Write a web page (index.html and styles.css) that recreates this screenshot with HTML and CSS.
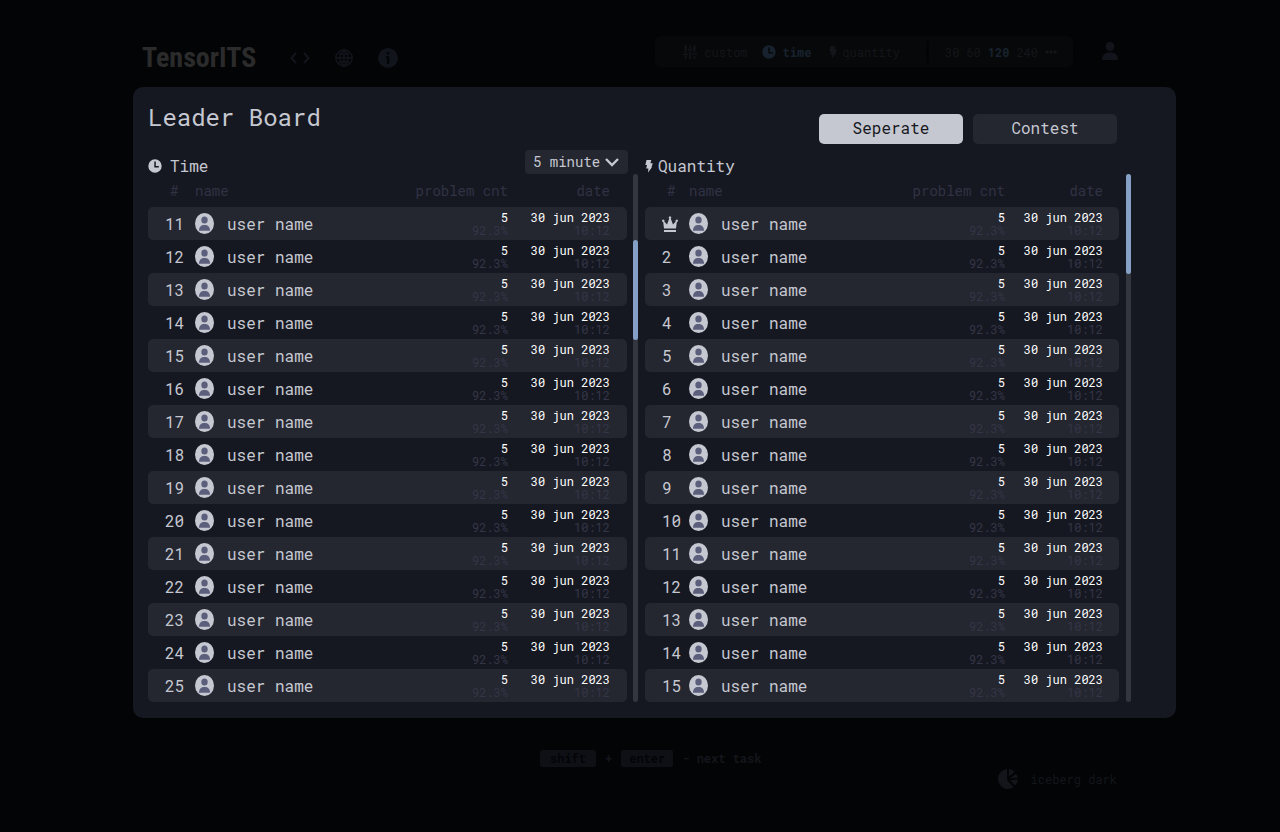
FILE: index.html
```
<!DOCTYPE html>
<html lang="en">
<head>
<meta charset="utf-8">
<title>TensorITS - Leader Board</title>
<link rel="stylesheet" href="styles.css">
</head>
<body>
<svg class="sprite" aria-hidden="true">
  <symbol id="avatar" viewBox="0 0 19 21">
    <ellipse cx="9.5" cy="10.5" rx="9.5" ry="10.5" fill="#c6c8d1"/>
    <ellipse cx="9.5" cy="7" rx="3.2" ry="3.6" fill="#5b5f7b"/>
    <path d="M4 17.800c0-4 2-5.800 5.500-5.800s5.500 1.800 5.500 5.800z" fill="#5b5f7b"/>
  </symbol>
  <symbol id="clock" viewBox="0 0 14 14">
    <path fill="currentColor" fill-rule="evenodd" d="M7 .3a6.700 6.700 0 1 0 0 13.400a6.700 6.700 0 0 0 0-13.400zM6.300 2.500h1.500v4.400h3v1.500H6.300z"/>
  </symbol>
  <symbol id="bolt" viewBox="0 0 8 14">
    <path fill="currentColor" d="M1.500 1h4.800L5.400 4.200H7.800L6.500 8.200H7L3 13.500 3.400 9.500H1.200L2 6H.4z"/>
  </symbol>
  <symbol id="crown" viewBox="0 0 16 16">
    <path fill="currentColor" d="M2 12.500 1.200 6A1.200 1.200 0 1 1 2.300 5.400L5 8.500 7.300 2.600a1.200 1.200 0 1 1 1.400 0L11 8.500l2.700-3.100A1.200 1.200 0 1 1 14.800 6L14 12.500zM2 14h12v2H2z"/>
  </symbol>
</svg>

<div class="page">
  <header class="topbar">
    <div class="brand">
      <span class="logo">TensorITS</span>
      <a href="#" aria-label="Code"><svg width="20" height="20" viewBox="0 0 20 20" fill="none" stroke="currentColor" stroke-width="2"><path d="M6 5 1.500 10 6 15M14 5l4.500 5L14 15"/></svg></a>
      <a href="#" aria-label="Language"><svg width="20" height="20" viewBox="0 0 20 20" fill="none" stroke="currentColor" stroke-width="1.500"><circle cx="10" cy="10" r="8.200"/><path d="M10 2v16M2 10h16M4 4.500c3.500 3 8.500 3 12 0M4 15.500c3.500-3 8.500-3 12 0M10 2c-5.500 4-5.500 12 0 16M10 2c5.500 4 5.500 12 0 16"/></svg></a>
      <a href="#" aria-label="About"><svg width="20" height="20" viewBox="0 0 20 20"><circle cx="10" cy="10" r="10" fill="currentColor"/><path d="M9 4h2.300v2.400H9zM8 8.300h3.300V16H9v-6H8z" fill="#030406"/></svg></a>
    </div>
    <nav class="modes">
      <button class="mode" type="button"><svg width="14" height="14" viewBox="0 0 14 14" fill="none" stroke="currentColor" stroke-width="1.600"><path d="M2.500 0v8M2.500 11v3M7 0v3M7 6v8M11.500 0v7M11.500 11v3M0 9.500h5M4.500 4.500h5M9 9h5M1 3h3M10 3h3"/></svg>custom</button>
      <button class="mode active" type="button"><svg width="14" height="14"><use href="#clock"/></svg>time</button>
      <button class="mode tight" type="button"><svg width="8" height="14"><use href="#bolt"/></svg>quantity</button>
      <span class="divider"></span>
      <div class="counts">
        <button type="button">30</button>
        <button type="button">60</button>
        <button type="button" class="active">120</button>
        <button type="button">240</button>
        <button type="button" aria-label="More"><svg width="12" height="4" viewBox="0 0 12 4" fill="currentColor"><circle cx="2" cy="2" r="1.700"/><circle cx="6" cy="2" r="1.700"/><circle cx="10" cy="2" r="1.700"/></svg></button>
      </div>
    </nav>
    <a class="account" href="#" aria-label="Account"><svg width="16" height="18" viewBox="0 0 16 18" fill="currentColor"><circle cx="8" cy="4.500" r="4.500"/><path d="M0 18c0-5 2.500-7.500 8-7.500s8 2.500 8 7.500z"/></svg></a>
  </header>

  <main class="dialog" role="dialog" aria-labelledby="title">
    <div class="dialog-head">
      <h1 id="title">Leader Board</h1>
      <div class="tabs">
        <button class="tab selected" type="button">Seperate</button>
        <button class="tab" type="button">Contest</button>
      </div>
    </div>
    <div class="boards">
      <section class="board">
        <div class="board-head">
          <h2><svg width="14" height="14"><use href="#clock"/></svg>Time</h2>
          <div class="picker">
            <select aria-label="Duration"><option>5 minute</option></select>
            <svg width="14" height="9" viewBox="0 0 14 9" fill="none" stroke="currentColor" stroke-width="2.400"><path d="M1 1l6 6 6-6"/></svg>
          </div>
        </div>
        <table>
          <colgroup><col class="col-rank"><col class="col-face"><col><col class="col-count"><col class="col-date"></colgroup>
          <thead><tr><th class="rank">#</th><th class="name" colspan="2">name</th><th class="count">problem cnt</th><th class="date">date</th></tr></thead>
          <tbody data-from="11" data-to="25"></tbody>
        </table>
        <div class="track"><div class="thumb scrolled"></div></div>
      </section>
      <section class="board quantity">
        <div class="board-head">
          <h2><svg width="8" height="14"><use href="#bolt"/></svg>Quantity</h2>
        </div>
        <table>
          <colgroup><col class="col-rank"><col class="col-face"><col><col class="col-count"><col class="col-date"></colgroup>
          <thead><tr><th class="rank">#</th><th class="name" colspan="2">name</th><th class="count">problem cnt</th><th class="date">date</th></tr></thead>
          <tbody data-from="1" data-to="15"></tbody>
        </table>
        <div class="track"><div class="thumb"></div></div>
      </section>
    </div>
  </main>

  <footer class="footer">
    <p class="hint"><kbd>shift</kbd><span>+</span><kbd>enter</kbd><span>- next task</span></p>
    <button class="theme" type="button"><svg width="20" height="20" viewBox="0 0 20 20" fill="currentColor"><path d="M9 0a10 10 0 1 0 6.500 18.300L9 11zM11 0v7.500L16.500 3A10 10 0 0 0 11 0zM18 4.800 12 9.500l7.800-1A10 10 0 0 0 18 4.800zM12 11.200l5 5.300a10 10 0 0 0 3-6.200z"/></svg>iceberg dark</button>
  </footer>
</div>
<script src="board.js"></script>
</body>
</html>
```

FILE: styles.css
```
* { box-sizing: border-box; }

body {
  margin: 0;
  background: #030406;
  color: #c6c8d1;
  font-family: "Roboto Mono", "Liberation Mono", monospace;
  font-size: 16px;
}

h1, h2, p { margin: 0; font-weight: 400; }
svg { display: block; flex: none; }
.sprite { position: absolute; width: 0; height: 0; }

button, select {
  font: inherit;
  color: inherit;
  background: none;
  border: 0;
  padding: 0;
}

a { color: inherit; }

.page { padding: 36px 104px 0 133px; }

/* top bar */
.topbar {
  display: flex;
  align-items: flex-start;
  padding: 0 58px 14px 9px;
  color: #12141b;
}

.brand {
  display: flex;
  align-items: center;
  gap: 24px;
  height: 31px;
  margin-top: 6px;
}

.logo {
  width: 124px;
  font: 700 28px/31px "Roboto Condensed", Roboto, sans-serif;
  color: #2b2b2b;
}

.modes {
  display: flex;
  align-items: center;
  height: 31px;
  margin-left: auto;
  padding: 0 16px 0 28px;
  border-radius: 5px;
  background: #070809;
  font-size: 12px;
  color: #14151a;
}

.mode { display: flex; align-items: center; gap: 7px; margin-right: 14px; }
.mode.tight { gap: 5px; margin: 0 26px 0 4px; }
.modes .active { color: #18222e; font-weight: 700; }
.divider { width: 3px; height: 22px; margin-right: 16px; background: #030406; }
.counts { display: flex; align-items: center; gap: 7px; }
.account { margin: 6px 0 0 29px; }

/* dialog */
.dialog {
  padding: 0 45px 16px 15px;
  border-radius: 10px;
  background: #161821;
}

.dialog-head {
  display: flex;
  justify-content: space-between;
  height: 63px;
  padding-right: 14px;
}

h1 { padding-top: 14px; font-size: 24px; line-height: 32px; }

.tabs { display: flex; gap: 10px; padding-top: 27px; }

.tab {
  width: 144px;
  height: 30px;
  padding: 0 4px 3px;
  border-radius: 5px;
  background: #242630;
}

.tab.selected { background: #c6c8d1; color: #161821; }

.boards { display: grid; grid-template-columns: 490fr 486fr; gap: 7px; }

.board {
  display: grid;
  grid-template-columns: 1fr 5px;
  grid-template-rows: 24px auto;
  column-gap: 6px;
}

.board.quantity { column-gap: 7px; }
.board-head { grid-column: 1 / -1; display: flex; justify-content: space-between; padding-right: 10px; }
h2 { display: flex; align-items: center; gap: 8px; padding-top: 8px; font-size: 16px; line-height: 16px; }
.quantity h2 { gap: 5px; }

.picker { display: grid; align-items: center; width: 103px; height: 24px; }
.picker select, .picker svg { grid-area: 1 / 1; }
.picker select {
  appearance: none;
  height: 24px;
  padding: 0 8px 2px;
  border-radius: 4px;
  background: #242630;
  font-size: 14px;
}
.picker svg { justify-self: end; margin-right: 9px; pointer-events: none; }

table { width: 100%; border-spacing: 0; table-layout: fixed; }
tr { height: 33px; }
th, td { padding: 0; text-align: left; white-space: nowrap; }
th { font-size: 14px; font-weight: 400; color: #303244; }
.col-rank { width: 47px; }
.col-face { width: 32px; }
.col-count { width: 100px; }
.col-date { width: 119px; }
.rank { padding-left: 17px; }
th.rank { padding-left: 22px; }
.count { text-align: right; }
.date { padding-right: 17px; text-align: right; }
td.count, td.date { font-size: 12px; line-height: 13px; color: #fff; }
td small { display: block; font-size: 12px; color: #343647; }
tbody tr:nth-child(odd) td { background: #242630; }
tbody td:first-child { border-radius: 5px 0 0 5px; }
tbody td:last-child { border-radius: 0 5px 5px 0; }
.quantity .col-rank { width: 44px; }
.quantity .col-date { width: 114px; }
.quantity .date { padding-right: 16px; }

.track { border-radius: 3px; background: #33353f; }
.thumb { height: 100px; border-radius: 3px; background: #84a0c6; }
.thumb.scrolled { transform: translateY(66px); }

/* footer */
.footer { padding-top: 32px; font-size: 12px; color: #14151a; }
.hint { display: flex; align-items: center; gap: 9px; margin-left: 407px; font-weight: 700; line-height: 17px; }
kbd { padding: 0 8px; border-radius: 2px; background: #0f1016; color: #030406; font: inherit; }
kbd:first-child { padding: 0 10px; }
.theme { display: flex; align-items: center; gap: 13px; margin: 2px 59px 0 auto; }
```

FILE: board.js
```
document.querySelectorAll("tbody").forEach(function (body) {
  for (let n = Number(body.dataset.from); n <= Number(body.dataset.to); n++) {
    const rank = n === 1
      ? '<svg width="16" height="16" role="img" aria-label="1"><use href="#crown"/></svg>'
      : n;
    body.insertAdjacentHTML("beforeend",
      '<tr><td class="rank">' + rank + '</td>' +
      '<td class="face"><svg width="19" height="21"><use href="#avatar"/></svg></td>' +
      '<td class="name">user name</td>' +
      '<td class="count">5<small>92.3%</small></td>' +
      '<td class="date">30 jun 2023<small>10:12</small></td></tr>');
  }
});
```
